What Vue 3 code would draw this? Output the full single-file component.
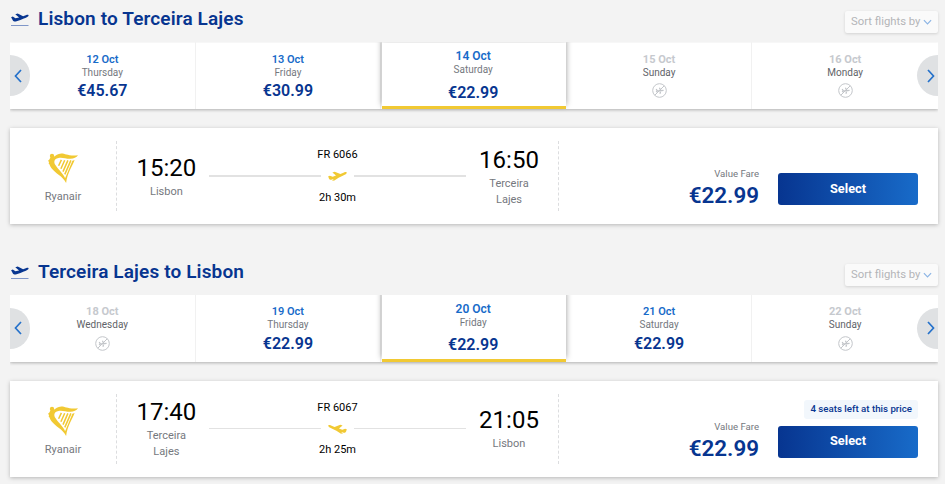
<template>
  <main class="flights">
    <section v-for="trip in trips" :key="trip.title" class="journey">
      <header class="journey-header">
        <svg class="takeoff" viewBox="0 0 18 15">
          <path
            d="M.1 4.2 1.8 3.6 4.4 5.2 8.1 4.4 4.3 1.2 6.7.6 12.1 3.2 15.4 2C17.1 1.5 17.8 2.2 17.5 3 17.2 3.8 14.9 4.7 12.8 5.5L9.4 7 4.8 8.5C3.4 8.8 2.5 8.3 1.9 7.5Z"
          />
          <path class="runway" d="M0 12.5h17.5" />
        </svg>
        <h1>{{ trip.title }}</h1>
        <button class="sort">
          Sort flights by
          <svg viewBox="0 0 10 6"><path d="M1 1l4 4 4-4" /></svg>
        </button>
      </header>

      <div class="carousel">
        <button class="arrow prev">
          <svg viewBox="0 0 8 14"><path d="M7 1 1.5 7 7 13" /></svg>
        </button>
        <div
          v-for="day in trip.days"
          :key="day.date"
          :class="['day', day.active && 'active', !day.price && 'disabled']"
        >
          <span class="date">{{ day.date }}</span>
          <span class="weekday">{{ day.weekday }}</span>
          <span v-if="day.price" class="price">{{ day.price }}</span>
          <svg v-else class="no-flight" viewBox="0 0 15 15">
            <circle cx="7.5" cy="7.5" r="6.8" />
            <path d="M2.7 12.3 12.3 2.7" />
            <path class="plane" d="M4.2 6l1 1.8-1 1.4M5 8l6.6-.6M7.4 4.8l1.5 2.8-1 3.2" />
          </svg>
        </div>
        <button class="arrow next">
          <svg viewBox="0 0 8 14"><path d="M1 1 6.5 7 1 13" /></svg>
        </button>
      </div>

      <article class="card">
        <div class="carrier">
          <svg class="harp" viewBox="0 0 30 30">
            <circle cx="4" cy="3" r="2.2" />
            <path
              d="M5 4.2C8 2.8 9.6.6 13.2.5 17.5.4 19.5 3.2 30 2.3 28.5 4.4 25.8 5.7 22.3 5.7 17.7 5.7 14.8 4.3 11.5 4.7 8.6 5 7.2 6.2 6.6 7.4 6 9 6.5 10.6 7.6 12.3 10.5 16.8 16 21.6 17.1 25.3L24.4 7.7 26.6 6.9C25 12 19.3 19.5 18.1 30 14.5 23 7.5 20.6 3.5 15.3 1.8 13 2 11.5.5 10.2 1.4 9.9.9 8.7.1 7.4 1.6 7.3 1.6 5.5 2.6 4.5Z"
            />
            <path class="strings" d="M13.4 6.9 10.6 12.8M16.7 7.2 12.9 15.8M19.9 7.4 15 18.6M22.9 7.4 16.8 21.4" />
          </svg>
          <span>Ryanair</span>
        </div>

        <div class="schedule">
          <div class="stop">
            <time>{{ trip.departs }}</time>
            <span>{{ trip.from }}</span>
          </div>
          <div class="route">
            <span>{{ trip.number }}</span>
            <div :class="['path', trip.inbound && 'inbound']">
              <svg viewBox="0 0 19 10">
                <path
                  d="M.2 5.2 1.9 4.7 4.7 5.7 8 4.6 4.4 1.4 6.7.7 12.4 3.1 16 1.5C17.8.8 18.9 1.1 18.7 2 18.5 3 16.6 3.9 14.8 4.8L10.6 6.8 6.4 9.6 4 9.8 5.8 8 3.2 8.7C1.8 8.9 1.1 8.2.8 7.2Z"
                />
              </svg>
            </div>
            <span>{{ trip.duration }}</span>
          </div>
          <div class="stop">
            <time>{{ trip.arrives }}</time>
            <span>{{ trip.to }}</span>
          </div>
        </div>

        <div class="fare">
          <span class="fare-name">Value Fare</span>
          <span class="fare-price">€22.99</span>
        </div>
        <div class="action">
          <span v-if="trip.notice" class="notice">{{ trip.notice }}</span>
          <button class="select">Select</button>
        </div>
      </article>
    </section>
  </main>
</template>

<script setup>
const trips = [
  {
    title: "Lisbon to Terceira Lajes",
    from: "Lisbon",
    to: "Terceira Lajes",
    departs: "15:20",
    arrives: "16:50",
    number: "FR 6066",
    duration: "2h 30m",
    days: [
      { date: "12 Oct", weekday: "Thursday", price: "€45.67" },
      { date: "13 Oct", weekday: "Friday", price: "€30.99" },
      { date: "14 Oct", weekday: "Saturday", price: "€22.99", active: true },
      { date: "15 Oct", weekday: "Sunday" },
      { date: "16 Oct", weekday: "Monday" },
    ],
  },
  {
    title: "Terceira Lajes to Lisbon",
    from: "Terceira Lajes",
    to: "Lisbon",
    departs: "17:40",
    arrives: "21:05",
    number: "FR 6067",
    duration: "2h 25m",
    inbound: true,
    notice: "4 seats left at this price",
    days: [
      { date: "18 Oct", weekday: "Wednesday" },
      { date: "19 Oct", weekday: "Thursday", price: "€22.99" },
      { date: "20 Oct", weekday: "Friday", price: "€22.99", active: true },
      { date: "21 Oct", weekday: "Saturday", price: "€22.99" },
      { date: "22 Oct", weekday: "Sunday" },
    ],
  },
];
</script>

<style>
body {
  background: #f3f3f3;
}
</style>

<style scoped>
.flights {
  box-sizing: border-box;
  height: 484px;
  padding: 0 7px 0 10px;
  overflow: hidden;
  font-family: Roboto, "Liberation Sans", sans-serif;
  color: #000;
}
.flights * {
  box-sizing: border-box;
}
button {
  border: none;
  padding: 0;
  font-family: inherit;
}
svg {
  display: block;
  flex: none;
}
.journey {
  height: 252.8px;
}

.journey-header {
  display: flex;
  align-items: flex-start;
  height: 42px;
}
.takeoff {
  width: 18px;
  height: 15px;
  margin: 13px 9px 0 1px;
  fill: #073590;
}
.takeoff .runway {
  stroke: #7f96c8;
  stroke-width: 1;
}
.journey-header h1 {
  flex: 1;
  margin: 7px 0 0;
  font-size: 19px;
  line-height: 24px;
  font-weight: 600;
  letter-spacing: 0.13px;
  color: #073590;
}
.sort {
  display: flex;
  align-items: center;
  gap: 3px;
  width: 93px;
  height: 22px;
  margin-top: 11px;
  padding: 0 0 1px 6px;
  background: #fafafa;
  border-radius: 2px;
  box-shadow: 0 1px 3px rgba(0, 0, 0, 0.14);
  font-size: 11.3px;
  white-space: nowrap;
  color: #b4b5b8;
}
.sort svg {
  width: 9px;
  height: 6px;
  margin-top: 1px;
  fill: none;
  stroke: #8bb4e4;
  stroke-width: 1.3;
}

.carousel {
  position: relative;
  display: flex;
  width: 928px;
  height: 67px;
  background: #fff;
  box-shadow: 0 1px 3px rgba(0, 0, 0, 0.28);
  clip-path: inset(0.2px 0 -5px 0);
}
.day {
  flex: none;
  width: 20%;
  display: flex;
  flex-direction: column;
  align-items: center;
  padding-top: 10.6px;
  border-right: 1px solid #f1f1f1;
}
.day:nth-last-child(2) {
  border-right: none;
}
.date {
  font-size: 11px;
  line-height: 14px;
  font-weight: 600;
  color: #186bc9;
}
.weekday {
  margin-top: -1px;
  font-size: 10px;
  line-height: 13px;
  color: #75787e;
}
.price {
  margin-top: 1.2px;
  font-size: 16px;
  line-height: 22px;
  font-weight: 600;
  color: #073590;
}
.day.active {
  z-index: 1;
  width: calc(20% - 1.4px);
  margin: 0 1px 0 0.4px;
  padding: 7px 1px 0 0;
  background: #fff;
  border-right: none;
  border-bottom: 3px solid #f1c933;
  box-shadow: 0 -4px 6px rgba(0, 0, 0, 0.4);
}
.active .date {
  font-size: 12px;
}
.active .weekday {
  margin-top: 0;
}
.active .price {
  margin-top: 5.6px;
}
.disabled .date {
  font-weight: 700;
  color: #c6c9ce;
}
.disabled .weekday {
  color: #5f6368;
}
.no-flight {
  width: 15px;
  height: 15px;
  margin-top: 4.4px;
  fill: none;
  stroke: #c3c6ca;
  stroke-width: 1;
}
.no-flight .plane {
  stroke-width: 1.3;
}
.arrow {
  position: absolute;
  top: 13px;
  z-index: 2;
  display: flex;
  align-items: center;
  width: 20px;
  height: 41px;
  background: #dfe1e3;
}
.arrow svg {
  width: 8px;
  height: 14px;
  fill: none;
  stroke: #2672cb;
  stroke-width: 1.7;
}
.prev {
  left: 0;
  padding-left: 3.5px;
  border-radius: 0 21px 21px 0;
}
.next {
  right: 0;
  width: 21px;
  padding-left: 9.5px;
  border-radius: 21px 0 0 21px;
}

.card {
  display: flex;
  width: 928px;
  height: 96px;
  margin-top: 19px;
  background: #fff;
  box-shadow: 0 1px 4px rgba(0, 0, 0, 0.25);
}
.carrier {
  display: flex;
  flex-direction: column;
  align-items: center;
  width: 107px;
  height: 70px;
  margin-top: 13px;
  padding-top: 12px;
  border-right: 1px dashed #dcdddf;
  font-size: 11px;
  line-height: 16px;
  color: #75787e;
}
.harp {
  width: 30px;
  height: 30px;
  margin-bottom: 6px;
  fill: #f1c933;
}
.harp .strings {
  fill: none;
  stroke: #f1c933;
  stroke-width: 1.5;
}
.schedule {
  display: flex;
  align-items: center;
  width: 442px;
  height: 70px;
  margin-top: 13px;
  border-right: 1px dashed #dcdddf;
}
.stop {
  display: flex;
  flex-direction: column;
  align-items: center;
  width: 60px;
  margin: 0 12.6px 0 19.4px;
  padding-top: 1.3px;
}
.stop time {
  font-size: 24px;
  line-height: 28px;
}
.stop span {
  width: 50px;
  margin-top: 2px;
  font-size: 11px;
  line-height: 16px;
  text-align: center;
  color: #75787e;
}
.route {
  flex: 1;
  display: flex;
  flex-direction: column;
  align-items: center;
  padding-top: 1px;
  font-size: 11px;
  line-height: 14px;
}
.route + .stop {
  margin: 0 19px 0 13px;
}
.path {
  display: flex;
  align-items: center;
  align-self: stretch;
  gap: 7px;
  height: 28.4px;
  padding-bottom: 1px;
}
.path::before,
.path::after {
  content: "";
  flex: 1;
  height: 2px;
  background: #e2e2e2;
}
.path svg {
  width: 19px;
  height: 10px;
  fill: #f1c933;
}
.inbound::before,
.inbound::after {
  height: 1px;
}
.inbound svg {
  transform: scaleX(-1);
}

.fare {
  flex: 1;
  display: flex;
  flex-direction: column;
  align-items: flex-end;
  padding-top: 40px;
  color: #75787e;
}
.fare-name {
  font-size: 9.6px;
  line-height: 12px;
}
.fare-price {
  font-size: 22.4px;
  line-height: 30px;
  font-weight: 600;
  color: #073590;
}
.action {
  display: flex;
  flex-direction: column;
  align-items: flex-end;
  justify-content: flex-end;
  margin: 0 20px 19px 19px;
}
.notice {
  height: 19px;
  margin-bottom: 7px;
  padding: 0 6px;
  background: #f2f7fc;
  border-radius: 3px;
  font-size: 9.7px;
  line-height: 18px;
  font-weight: 500;
  color: #073590;
}
.select {
  width: 140px;
  height: 32px;
  padding-bottom: 2px;
  background: linear-gradient(to right, #073590, #186bc9);
  border-radius: 3px;
  font-size: 12.8px;
  font-weight: 700;
  color: #fff;
}
</style>
